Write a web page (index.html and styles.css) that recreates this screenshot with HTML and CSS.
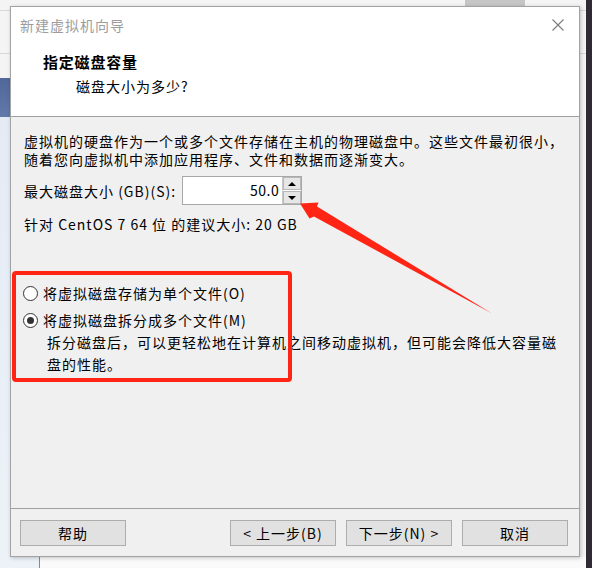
FILE: index.html
```html
<!DOCTYPE html>
<html lang="zh-CN">
<head>
<meta charset="utf-8">
<title>新建虚拟机向导</title>
<link rel="stylesheet" href="styles.css">
</head>
<body>
<div class="dialog">
  <header class="head">
    <div class="titlebar">
      <span class="title">新建虚拟机向导</span>
      <svg class="close" width="12" height="12" viewBox="0 0 12 12"><path d="M0.5 0.5 L11.5 11.5 M11.5 0.5 L0.5 11.5" stroke="#7a7a7a" stroke-width="1.1" fill="none"/></svg>
    </div>
    <div class="heading">指定磁盘容量</div>
    <div class="sub">磁盘大小为多少?</div>
  </header>
  <main class="content">
    <p class="intro">虚拟机的硬盘作为一个或多个文件存储在主机的物理磁盘中。这些文件最初很小，<br>随着您向虚拟机中添加应用程序、文件和数据而逐渐变大。</p>
    <div class="size-row">
      <span class="label">最大磁盘大小 (GB)(S):</span>
      <div class="spin">
        <div class="spin-val">50.0</div>
        <div class="spin-btns">
          <span class="sbtn"><i class="tri up"></i></span>
          <span class="sbtn"><i class="tri down"></i></span>
        </div>
      </div>
    </div>
    <p class="rec">针对 CentOS 7 64 位 的建议大小: 20 GB</p>
    <div class="options">
      <div class="radio"><span class="dot"></span><span>将虚拟磁盘存储为单个文件(O)</span></div>
      <div class="radio checked"><span class="dot"></span><span>将虚拟磁盘拆分成多个文件(M)</span></div>
      <p class="desc">拆分磁盘后，可以更轻松地在计算机之间移动虚拟机，但可能会降低大容量磁<br>盘的性能。</p>
    </div>
  </main>
  <footer class="foot">
    <button class="btn help">帮助</button>
    <button class="btn">&lt; 上一步(B)</button>
    <button class="btn">下一步(N) &gt;</button>
    <button class="btn">取消</button>
  </footer>
</div>
<div class="mark"></div>
<svg class="arrow" width="592" height="568" viewBox="0 0 592 568">
  <polygon points="300,203.5 318.5,202.5 317,206.5 492,313.5 314,216.5 309.5,218.5" fill="#ff2414"/>
</svg>
</body>
</html>
```

FILE: styles.css
```css
html, body {
  margin: 0;
  padding: 0;
}
body {
  width: 592px;
  height: 568px;
  overflow: hidden;
  position: relative;
  font-family: "Noto Sans CJK SC", "Noto Sans", sans-serif;
  font-size: 14px;
  letter-spacing: 1px;
  color: #000;
  background:
    linear-gradient(#2e2b35, #2e2b35) 586px 0 / 6px 568px no-repeat,
    linear-gradient(#c6c6c6, #c6c6c6) 465px 0 / 60px 6px no-repeat,
    linear-gradient(#50679a, #6079aa) 0 78px / 10px 39px no-repeat,
    linear-gradient(#e4ebf5, #edf2f8) 0 117px / 39px 451px no-repeat,
    linear-gradient(#8a8a8a, #8a8a8a) 39px 557px / 1px 11px no-repeat,
    linear-gradient(#fafafa, #fafafa) 40px 557px / 546px 11px no-repeat,
    linear-gradient(#d8d8d8, #d8d8d8) 0 10px / 592px 1px no-repeat,
    linear-gradient(#d8d8d8, #d8d8d8) 0 53px / 592px 1px no-repeat,
    #f4f4f4;
}

.dialog {
  position: absolute;
  left: 10px;
  top: 6px;
  width: 568px;
  height: 549px;
  border: 1px solid #a3a3a3;
  background: #f0f0f0;
  box-shadow: 1px 1px 4px rgba(0, 0, 0, 0.22);
  display: flex;
  flex-direction: column;
}

.head {
  height: 109px;
  background: #fff;
  border-bottom: 1px solid #a0a0a0;
  flex: none;
}
.titlebar {
  display: flex;
  justify-content: space-between;
  align-items: center;
  padding: 8px 15px 0 9px;
  height: 20px;
}
.title {
  color: #9c9c9c;
  line-height: 20px;
}
.close {
  display: block;
}
.heading {
  margin-top: 17px;
  padding-left: 32px;
  line-height: 20px;
  font-size: 15px;
  font-weight: 700;
  letter-spacing: 0.8px;
}
.sub {
  margin-top: 4px;
  padding-left: 65px;
  line-height: 20px;
}

.content {
  flex: 1;
  padding: 15px 0 0 13px;
}
.intro {
  margin: 0;
  line-height: 18px;
  white-space: nowrap;
}
.size-row {
  margin-top: 8px;
  display: flex;
  align-items: center;
  gap: 6px;
}
.label {
  line-height: 18px;
}
.spin {
  display: flex;
  width: 118px;
  height: 27px;
  border: 1px solid #a8a8a8;
  background: #fff;
}
.spin-val {
  flex: 1;
  text-align: right;
  padding-right: 3px;
  line-height: 27px;
  letter-spacing: 0.5px;
}
.spin-btns {
  width: 18px;
  display: flex;
  flex-direction: column;
  gap: 1px;
  padding: 0;
  background: #fff;
  border-left: 1px solid #c8c8c8;
}
.sbtn {
  flex: 1;
  background: #e6e6e6;
  border: 1px solid #b8b8b8;
  display: flex;
  align-items: center;
  justify-content: center;
}
.tri {
  width: 0;
  height: 0;
  border-left: 4px solid transparent;
  border-right: 4px solid transparent;
}
.tri.up {
  border-bottom: 4px solid #000;
}
.tri.down {
  border-top: 4px solid #000;
}
.rec {
  margin: 10px 0 0;
  line-height: 18px;
}

.options {
  margin-top: 49px;
  display: flex;
  flex-direction: column;
  gap: 5px;
}
.radio {
  display: flex;
  align-items: center;
  gap: 5px;
  line-height: 22px;
  margin-left: -1px;
}
.dot {
  width: 13px;
  height: 13px;
  border: 1px solid #333;
  border-radius: 50%;
  background: #fff;
  display: flex;
  align-items: center;
  justify-content: center;
  flex: none;
}
.radio.checked .dot::after {
  content: "";
  width: 7px;
  height: 7px;
  border-radius: 50%;
  background: #333;
}
.desc {
  margin: -5px 0 0;
  padding-left: 23px;
  line-height: 22px;
  white-space: nowrap;
}

.foot {
  flex: none;
  border-top: 1px solid #a0a0a0;
  padding: 11px 11px 10px 9px;
  display: flex;
  gap: 10px;
}
.btn {
  width: 106px;
  height: 26px;
  padding: 0;
  background: #e1e1e1;
  border: 1px solid #adadad;
  font: inherit;
  letter-spacing: 1px;
  color: #000;
  line-height: 24px;
}
.help {
  margin-right: auto;
}

.mark {
  position: absolute;
  left: 12px;
  top: 271px;
  width: 272px;
  height: 103px;
  border: 4px solid #ff2414;
  border-radius: 4px;
}
.arrow {
  position: absolute;
  left: 0;
  top: 0;
}
```
